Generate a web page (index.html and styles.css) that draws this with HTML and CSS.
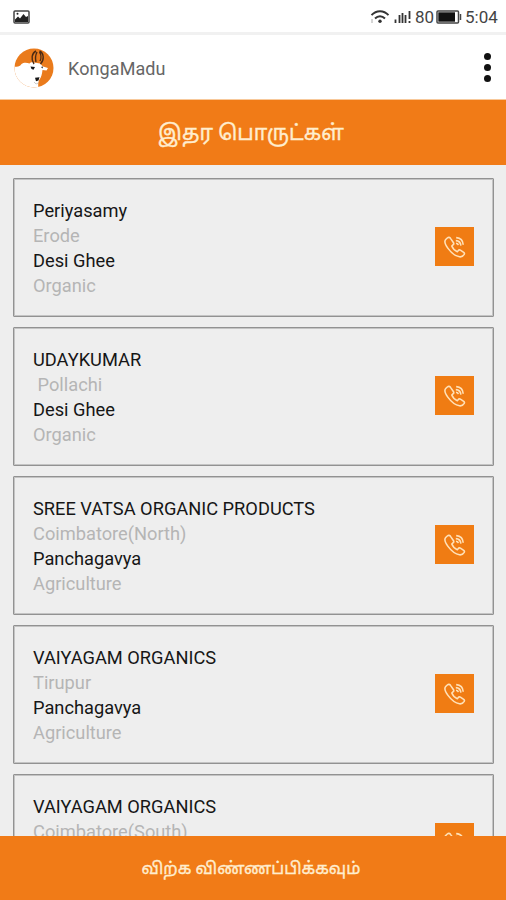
FILE: index.html
```html
<!DOCTYPE html>
<html lang="ta">
<head>
<meta charset="utf-8">
<title>KongaMadu</title>
<link rel="stylesheet" href="styles.css">
</head>
<body>
<svg width="0" height="0" class="defs">
  <symbol id="phone" viewBox="0 0 24 24">
    <path d="M4.300 3 2.700 4.500C1.300 6 2 9.300 5 13.400c3.400 4.600 7.600 7.800 11.500 8.400 2.200.3 3.800-1 4.700-2.500.5-.9.2-1.500-.5-2l-3.300-2.200c-.9-.5-1.600-.3-2.100.4l-1 1.200c-2.100-.9-4.700-3.600-5.500-5.700l1.400-1.300c.7-.6.7-1.200.3-2L7.700 3.600C6.800 2.100 5.500 2 4.300 3Z"/>
    <path d="M12.800 5.600c3 .1 4.800 2 5.100 5M13.200 2.600c4.300.3 6.800 3.200 7 7.200M13 8.200c1.400.1 2.100.8 2.300 2"/>
  </symbol>
</svg>
<div class="screen">
  <header class="status">
    <svg class="picture" viewBox="0 0 17 14"><rect x="1" y="1" width="15" height="12" rx="1"/><path d="M2 12V9.500l3-3 2 2 3.500-4.500L13 7l2-1v6Z"/><circle cx="4.500" cy="3.800" r="1"/></svg>
    <div class="indicators">
      <svg class="wifi" viewBox="0 0 20 16"><path d="M1.500 6.200c4.800-5.300 12.200-5.300 17 0M5 9.500c3-3.100 7-3.100 10 0"/><circle cx="10" cy="12.300" r="1.700"/><path class="tick" d="M2 10v4"/></svg>
      <svg class="signal" viewBox="0 0 17 14"><path d="M1.500 9.500V13M5.500 5v8M8.500 3v10M11.500 5v8M15.500 1v8M15.500 11v2"/></svg>
      <span class="percent">80</span>
      <svg class="battery" viewBox="0 0 26 14"><rect x="1" y="1" width="21.500" height="12" rx="1"/><rect class="fill" x="2.300" y="2.300" width="16.700" height="9.400"/><path d="M24.500 4v6"/></svg>
      <span class="clock">5:04</span>
    </div>
  </header>
  <div class="appbar">
    <svg class="logo" viewBox="0 0 40 40">
      <clipPath id="disc"><circle cx="20" cy="20" r="19.500"/></clipPath>
      <g clip-path="url(#disc)">
        <rect width="40" height="40" fill="#ea7b1c"/>
        <path d="M0 18.500c4 .5 6 0 7.500-2.500 2-1.500 5-1.500 8-.5 1-1.500 3-1.500 4.500-1l6 1 3 3 5 1.500-1.500 2.500-4-.5c-.5 4-1 7-3 9.500-1.500 2.500-1.500 5-1 9H0Z" fill="#fff"/>
        <path d="M20 16c-3.500-5-2-11 2-13M26.500 16c4-4 3.500-11-1-13M22 14c-1-4-.5-7 1-10M26 13c1.500-3 1-7-.5-9" fill="none" stroke="#4a2a14" stroke-width="1.400"/>
        <path d="m16.500 18.500 4.500.5-1.500 2.700-2-.8Zm4.500 11.200 4.500-.5-1 3.300-2.500.8ZM27 19l2-.5-.5 2Z" fill="#171717"/>
        <path d="m20 34 2 2 2.500-1" fill="none" stroke="#aaa" stroke-width=".6"/>
      </g>
    </svg>
    <span class="name">KongaMadu</span>
    <div class="more"><i></i><i></i><i></i></div>
  </div>
  <h1 class="title"><span>இதர பொருட்கள்</span></h1>
  <main class="list">
    <article class="card"><div class="info"><b>Periyasamy</b><span>Erode</span><b>Desi Ghee</b><span>Organic</span></div><a class="call"><svg><use href="#phone"/></svg></a></article>
    <article class="card"><div class="info"><b>UDAYKUMAR</b><span>&nbsp;Pollachi</span><b>Desi Ghee</b><span>Organic</span></div><a class="call"><svg><use href="#phone"/></svg></a></article>
    <article class="card"><div class="info"><b>SREE VATSA ORGANIC PRODUCTS</b><span>Coimbatore(North)</span><b>Panchagavya</b><span>Agriculture</span></div><a class="call"><svg><use href="#phone"/></svg></a></article>
    <article class="card"><div class="info"><b>VAIYAGAM ORGANICS</b><span>Tirupur</span><b>Panchagavya</b><span>Agriculture</span></div><a class="call"><svg><use href="#phone"/></svg></a></article>
    <article class="card"><div class="info"><b>VAIYAGAM ORGANICS</b><span>Coimbatore(South)</span></div><a class="call"><svg><use href="#phone"/></svg></a></article>
  </main>
  <footer class="apply"><span>விற்க விண்ணப்பிக்கவும்</span></footer>
</div>
</body>
</html>
```
FILE: styles.css
```css
* { box-sizing: border-box; }
body { margin: 0; font-family: Roboto, "Noto Sans Tamil", "Noto Sans", sans-serif; background: #eee; }
.defs { position: absolute; }
.screen { width: 506px; height: 900px; display: flex; flex-direction: column; overflow: hidden; }
.status { height: 35px; flex: none; display: flex; justify-content: space-between; align-items: center; padding: 1px 8px 0 13px; background: #fff; border-bottom: 3px solid #f1f1f1; color: #444; }
.picture { width: 17px; height: 14px; fill: #222; }
.picture rect { fill: none; stroke: #444; stroke-width: 1.500; }
.indicators { display: flex; align-items: center; font-size: 17px; line-height: 20px; }
.wifi { width: 20px; height: 16px; fill: #333; margin-right: 4px; }
.wifi path { fill: none; stroke: #333; stroke-width: 1.900; }
.wifi .tick { stroke: #aaa; stroke-width: 1; }
.signal { width: 17px; height: 14px; margin-right: 4px; fill: none; stroke: #333; stroke-width: 1.800; }
.percent { width: 21px; }
.battery { width: 26px; height: 14px; margin-right: 3px; fill: none; stroke: #444; stroke-width: 1.500; }
.battery .fill { fill: #111; stroke: none; }
.clock { width: 33px; white-space: nowrap; }
.appbar { height: 65px; flex: none; display: flex; align-items: center; background: #fff; padding: 0 15px 0 14px; border-bottom: 1px solid #f8c99b; }
.logo { width: 40px; height: 40px; margin-top: 1px; }
.name { margin: 3px auto 0 14px; font-size: 18px; letter-spacing: .1px; color: #666; }
.more { display: flex; flex-direction: column; gap: 4px; margin-top: 1px; }
.more i { width: 7px; height: 7px; border-radius: 50%; background: #111; }
.title { height: 65px; flex: none; margin: 0; display: flex; align-items: center; justify-content: center; background: #f17b17; color: #ffedce; font-size: 21.200px; font-weight: 400; white-space: nowrap; -webkit-text-stroke: .35px #ffedce; padding: 2px 4px 0 0; }
.list { flex: 1; min-height: 0; overflow: hidden; display: flex; flex-direction: column; gap: 10px; padding: 13px 12px 0 13px; }
.card { height: 139px; flex: none; display: flex; justify-content: space-between; align-items: flex-start; border: 1px solid #929292; border-radius: 1px; padding: 19px 19px 0 19px; background: #eee; box-shadow: inset 0 0 0 1px #c4c4c4; }
.info { display: flex; flex-direction: column; font-size: 18.250px; line-height: 25px; white-space: nowrap; }
.info b { font-weight: 400; color: #161616; }
.info span { color: #b5b5b5; }
.call { width: 39px; height: 39px; margin-top: 29px; display: flex; align-items: center; justify-content: center; background: #f07c13; }
.call svg { width: 24px; height: 24px; fill: none; stroke: #ffe1b8; stroke-width: 1.600; stroke-linejoin: round; }
.apply { height: 64px; flex: none; display: flex; align-items: center; justify-content: center; background: #f17b17; color: #ffedce; font-size: 16.600px; white-space: nowrap; -webkit-text-stroke: .35px #ffedce; padding: 3px 4px 0 0; }
```
